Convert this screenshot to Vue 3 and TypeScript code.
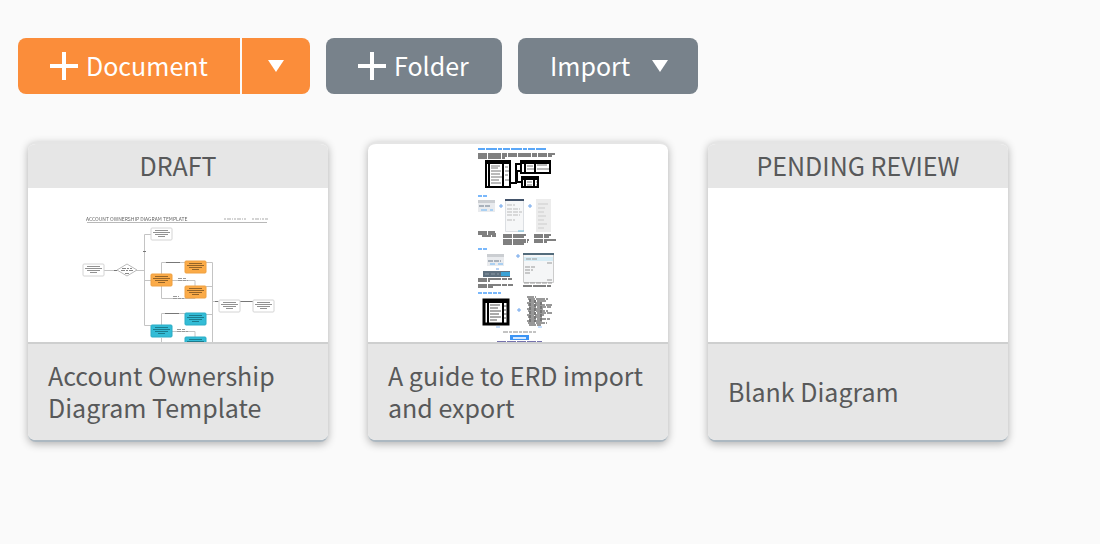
<script setup lang="ts">
interface Doc {
  title: string
  status?: string
  preview?: 'flow' | 'guide'
}

interface Box {
  x: number
  y: number
  fill: string
  ink: string
  edge: string
}

const docs: Doc[] = [
  { title: 'Account Ownership Diagram Template', status: 'DRAFT', preview: 'flow' },
  { title: 'A guide to ERD import and export', preview: 'guide' },
  { title: 'Blank Diagram', status: 'PENDING REVIEW' },
]

const white = { fill: '#fff', ink: '#777', edge: '#d4d4d4' }
const orange = { fill: '#fbab48', ink: '#7a5320', edge: '#efa040' }
const teal = { fill: '#33bcd6', ink: '#176b7c', edge: '#2bacc5' }

const boxes: Box[] = [
  { x: 123, y: 40, ...white },
  { x: 55, y: 76, ...white },
  { x: 191, y: 112, ...white },
  { x: 225, y: 112, ...white },
  { x: 123, y: 86, ...orange },
  { x: 157, y: 73, ...orange },
  { x: 157, y: 98, ...orange },
  { x: 123, y: 137, ...teal },
  { x: 157, y: 125, ...teal },
  { x: 157, y: 149, ...teal },
]

// Rows of unreadable body copy: x, y, width
const copy: number[][] = [
  [10, 10, 77], [10, 12, 74], [10, 14, 27],
  [10, 88, 17], [10, 90, 18], [14, 92, 14],
  [35, 91, 24], [35, 93, 21], [35, 96, 26], [35, 98, 25], [35, 100, 21],
  [66, 91, 17], [66, 93, 15], [66, 96, 22], [66, 98, 13],
  [10, 135, 34], [10, 137, 12], [10, 141, 35], [10, 143, 15],
  [55, 142, 28],
]

const scribble: number[] = [9, 20, 18, 15, 24, 22, 16, 20, 23, 18, 14, 21, 15, 19, 12]
</script>

<template>
  <main class="page">
    <div class="toolbar">
      <div class="split">
        <button type="button" class="btn primary">
          <svg class="plus" viewBox="0 0 28 28" aria-hidden="true"><path d="M12 0h4v12h12v4H16v12h-4V16H0v-4h12z" /></svg>
          <span class="label">Document</span>
        </button>
        <button type="button" class="btn primary more" aria-label="More document options">
          <svg class="caret" viewBox="0 0 16 12" aria-hidden="true"><path d="M0 0h16L8 12z" /></svg>
        </button>
      </div>
      <button type="button" class="btn folder">
        <svg class="plus" viewBox="0 0 28 28" aria-hidden="true"><path d="M12 0h4v12h12v4H16v12h-4V16H0v-4h12z" /></svg>
        <span class="label">Folder</span>
      </button>
      <button type="button" class="btn import">
        <span class="label">Import</span>
        <svg class="caret" viewBox="0 0 16 12" aria-hidden="true"><path d="M0 0h16L8 12z" /></svg>
      </button>
    </div>

    <section class="cards">
      <article v-for="doc in docs" :key="doc.title" class="card">
        <header v-if="doc.status" class="status">{{ doc.status }}</header>
        <div class="preview">
          <svg v-if="doc.preview === 'flow'" class="drawing" viewBox="0 0 300 154" preserveAspectRatio="xMidYMin slice" aria-hidden="true">
            <text class="heading" x="58" y="33">ACCOUNT OWNERSHIP DIAGRAM TEMPLATE</text>
            <path d="M196 31h23m5 0h16" stroke="#d4d4d4" stroke-width="2" stroke-dasharray="2 1 4 1 1 1" />
            <path d="M59 34.500h180" stroke="#b8b8b8" />
            <g fill="none" stroke="#c4c4c4" stroke-width="1">
              <path d="M76 82.500h14M107 82.500h9.500M123 46.500h-6.500v91h6.500M116.500 92.500h6.500M133.500 86v-11.500h23.500M133.500 98v12.500h33.500v-5M144 92.500h23v6M178 74.500h6.500v79.500M178 98.500h6.500M178 126.500h6.500M184.500 113.500h6.500M212 113.500h13M133.500 137v-11.500h23.500M144 143.500h23v6M133.500 150v4" />
            </g>
            <path d="M99 76l10 6-10 6-10-6z" fill="#fff" stroke="#bbb" />
            <path d="M94 80.500h10m-11 2h12m-8 3h5" stroke="#888" stroke-dasharray="4 1 2 1" />
            <path d="M138 74.500h14M137 125.500h14M212 113.500h13M115 63.500h3M187 113.500h3M86 82.500h3" stroke="#777" />
            <path d="M150 90.500h8m-8 2h10M145 108.500h6m-6 2h11M149 141.500h8m-8 2h11" stroke="#999" stroke-dasharray="4 1 3 1" />
            <g v-for="(box, i) in boxes" :key="i">
              <rect :x="box.x" :y="box.y" width="21" height="12" rx="1" :fill="box.fill" :stroke="box.edge" />
              <path :d="`M${box.x + 4} ${box.y + 2.5}h13m-15 2h17m-15 2h13m-10 2h7`" :stroke="box.ink" stroke-width="1" stroke-opacity="0.8" />
            </g>
          </svg>

          <svg v-else-if="doc.preview === 'guide'" class="drawing" viewBox="-100 0 300 198" preserveAspectRatio="xMidYMin slice" aria-hidden="true">
            <path d="M10 5h68" stroke="#5aa7f8" stroke-width="2" stroke-dasharray="7 1 11 1 4 1" />
            <path v-for="(row, i) in copy" :key="i" :d="`M${row[0]} ${row[1]}h${row[2]}`" stroke="#000" stroke-dasharray="9 1 13 1 5 1" />
            <g fill="#fff" stroke="#000" stroke-width="2">
              <path d="M18 17h24v26H18zM18 19h24M21 20v23M35 20v23M53 17h29v12H53zM53 19h29M57 19v10M67 19v10M54 33h16v10H54zM54 35h16M57 35v8M66 35v8" />
              <path d="M42 39h6V20h5M54 38h-5V27h4" fill="none" />
            </g>
            <path d="M23 22h9m-9 2h7m-7 3h10m-10 3h9m-9 3h11m-11 3h8m-8 3h10M37 23h3m-3 4h4m-4 4h3m-3 5h4M59 22h6m-6 3h7M69 21h10m-10 4h12M59 38h5m-5 3h5M68 38h1m-1 3h1" stroke="#777" />
            <path d="M10 52h10M10 105h10M10 149h23" stroke="#7ab8fb" stroke-width="2" stroke-dasharray="4 1" />
            <g>
              <path d="M10 56h17v12H10zM19 110h17v12H19z" fill="#e9ebee" />
              <path d="M10 56h17v3H10zM19 110h17v3H19z" fill="#cbced2" />
              <path d="M11 62h12M20 117h13" stroke="#69788a" stroke-dasharray="5 1" />
              <path d="M13 66h6m3 0h3M22 120h5m3 0h5" stroke="#6db5f6" />
              <path d="M37.500 55.500h18v32h-18z" fill="#f6f7f8" stroke="#dcdfe3" />
              <path d="M37 55h19v2H37z" fill="#43536a" />
              <path d="M39 61h8m-8 4h13m-13 3h15m-15 3h13m-13 5h8" stroke="#bbb" stroke-dasharray="5 1" />
              <path d="M50 87h6" stroke="#6dbbdc" />
              <path d="M68 55h15v33H68z" fill="#ececec" />
              <path d="M70 60h10m-10 4h7m-7 4h6m-6 4h8m-8 4h6m-6 4h9m-9 4h6" stroke="#ccc" />
              <path d="M31 62h4m-2-2v4M60 62h4m-2-2v4M48 112h4m-2-2v4M49 166h4m-2-2v4M28 125h3" stroke="#6ea4ea" />
            </g>
            <path d="M15 127h27v6H15z" fill="#5e6f7d" />
            <path d="M33 128h9v4h-9z" fill="#39a2d6" />
            <path d="M17 130h14" stroke="#8c9ba6" stroke-dasharray="4 2" />
            <path d="M55.500 110.500h30v28h-30z" fill="#f5f6f7" stroke="#ccc" />
            <path d="M55 109h31v2H55z" fill="#536c7c" />
            <path d="M56 113h29v4H56z" fill="#d6ecf5" />
            <path d="M58 115h12m9 4h6M57 123h10m-10 3h8m-8 3h6M79 136h5M56 139h28" stroke="#999" stroke-dasharray="5 1" />
            <path d="M16 156h24v24H16z" fill="#fff" stroke="#000" stroke-width="3" />
            <path d="M17 158h22M20 157v23M35 157v23" stroke="#000" stroke-width="2" />
            <path d="M22 161h10m-10 3h8m-8 3h11m-11 3h9m-9 3h11m-11 3h7M36 162h3m-3 4h2m-2 4h3m-3 4h2" stroke="#555" />
            <path v-for="(width, i) in scribble" :key="`line-${i}`" :d="`M${59 + (i % 3)} ${153 + i * 2}h${width}`" stroke="#333" stroke-width="1" stroke-dasharray="7 1 9 1" />
            <path d="M62 155v24M67 156v22M73 158v20" stroke="#777" stroke-width="2" stroke-dasharray="3 1" />
            <path d="M28 183h4M70 183h4" stroke="#8abcf7" />
            <path d="M35 188h33" stroke="#888" stroke-dasharray="5 1 3 1" />
            <path d="M42 191h19v5H42z" fill="#3c94f4" />
            <path d="M45 194h13" stroke="#d7eaff" stroke-width="2" />
            <path d="M29 197.500h45" stroke="#7773ad" stroke-dasharray="9 1" />
          </svg>
        </div>
        <footer class="caption"><span>{{ doc.title }}</span></footer>
      </article>
    </section>
  </main>
</template>

<style>
body {
  margin: 0;
  background: #fafafa;
}
</style>

<style scoped>
.page {
  box-sizing: border-box;
  min-height: 100vh;
  padding: 38px 18px;
  font-family: "Noto Sans CJK SC", "Noto Sans", sans-serif;
  font-size: 25px;
  line-height: 32px;
  color: #58595a;
}

.toolbar,
.split {
  display: flex;
}

.toolbar {
  flex-wrap: wrap;
  gap: 16px;
}

.split {
  gap: 2px;
}

.btn {
  display: flex;
  align-items: center;
  gap: 8px;
  height: 56px;
  padding: 0 32px;
  border: 0;
  border-radius: 8px;
  background: #78828b;
  color: #fff;
  font: inherit;
  cursor: pointer;
}

.label {
  padding-bottom: 2px;
}

.primary {
  background: #fb8d3a;
}

.split .btn:first-child {
  border-radius: 8px 0 0 8px;
}

.split .more {
  padding: 0 26px;
  border-radius: 0 8px 8px 0;
}

.folder {
  min-width: 176px;
}

.import {
  gap: 22px;
  padding: 0 30px 0 32px;
}

.plus {
  width: 28px;
  height: 28px;
  fill: #fff;
}

.caret {
  width: 16px;
  height: 12px;
  fill: #fff;
}

.cards {
  display: grid;
  grid-template-columns: repeat(auto-fill, 300px);
  gap: 40px;
  padding: 48px 10px;
}

.card {
  display: flex;
  flex-direction: column;
  min-height: 300px;
  box-sizing: border-box;
  overflow: hidden;
  border-top: 2px solid #e5e5e5;
  border-bottom: 2px solid #acb8c1;
  border-radius: 8px;
  background: #fff;
  box-shadow: 0 2px 8px rgba(0, 0, 0, 0.3);
}

.status {
  padding: 5px 0 7px;
  background: #e6e6e6;
  text-align: center;
}

.preview {
  flex: 1 1 0;
  min-height: 0;
  overflow: hidden;
}

.drawing {
  display: block;
  width: 100%;
  filter: blur(0.5px);
}

.heading {
  fill: #666;
  font-size: 5px;
}

.caption {
  display: flex;
  align-items: center;
  box-sizing: border-box;
  min-height: 98px;
  padding: 15px 20px 17px;
  border-top: 2px solid #cecfcf;
  background: #e6e6e6;
}
</style>
